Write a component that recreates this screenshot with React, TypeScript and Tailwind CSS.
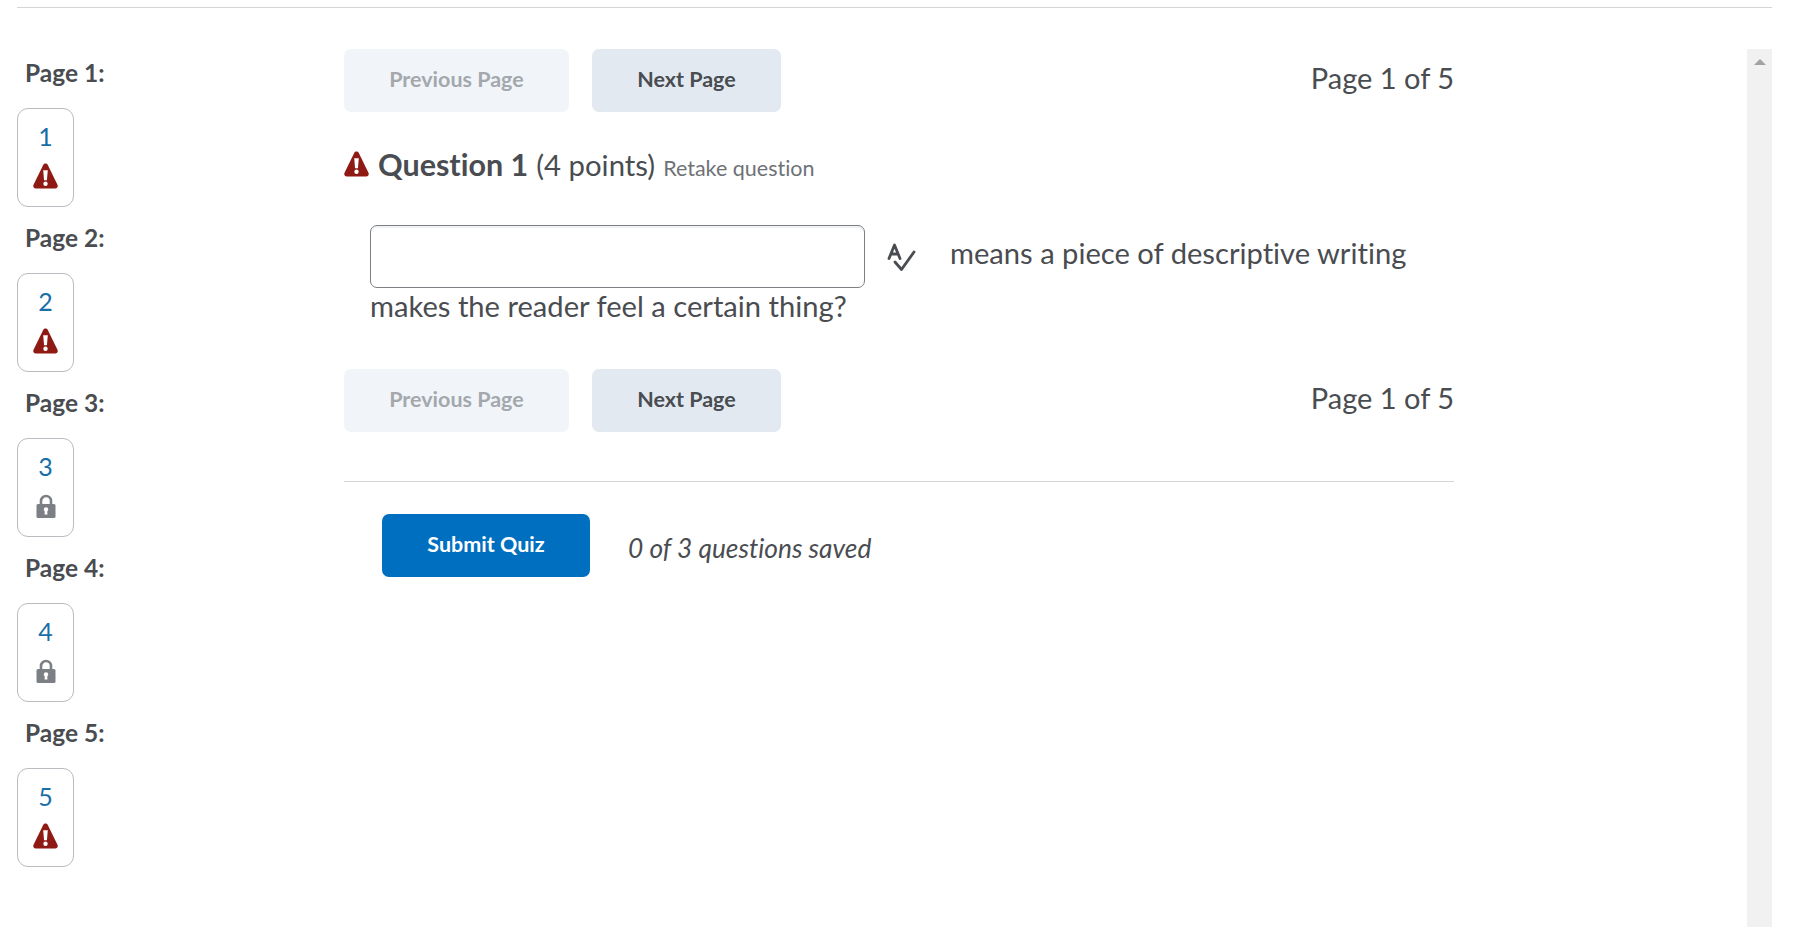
const pages = [
  { n: 1, locked: false },
  { n: 2, locked: false },
  { n: 3, locked: true },
  { n: 4, locked: true },
  { n: 5, locked: false },
];

function WarningIcon({ className }: { className: string }) {
  return (
    <svg viewBox="0 0 24 25" className={className}>
      <path d="M12 .5c-.9 0-1.700.5-2.100 1.300L.5 21c-.8 1.700.3 3.500 2.100 3.500h18.800c1.800 0 2.900-1.800 2.100-3.500L14.100 1.800C13.700 1 12.900.5 12 .5z" fill="#8f1a14" />
      <path d="M9.800 7h4.400l-.8 9.500h-2.800z" fill="#fff" />
      <circle cx="12" cy="20" r="2.100" fill="#fff" />
    </svg>
  );
}

function LockIcon() {
  return (
    <svg viewBox="0 0 20 24" className="w-[20px] h-[24px]">
      <path d="M5 11V7a5 5 0 0 1 10 0v4" fill="none" stroke="#7c7f83" strokeWidth="2.600" />
      <rect x="0.500" y="10" width="19" height="14" rx="1.500" fill="#7c7f83" />
      <circle cx="10" cy="15.500" r="2.200" fill="#fff" />
      <path d="M9 16h2l.5 4.500h-3z" fill="#fff" />
    </svg>
  );
}

function Pager({ className }: { className: string }) {
  return (
    <div className={`flex items-center justify-between ${className}`}>
      <div className="flex gap-[23px]">
        <button className="w-[225px] h-[63px] pb-[3px] rounded-[7px] bg-[#f1f5fa] text-[#a4a8ac] text-[21.500px] font-bold">Previous Page</button>
        <button className="w-[189px] h-[63px] pb-[3px] rounded-[7px] bg-[#e3e9f1] text-[#494c50] text-[21.500px] font-bold">Next Page</button>
      </div>
      <span className="text-[29px] text-[#494c50] pb-[5px]">Page 1 of 5</span>
    </div>
  );
}

export default function App() {
  return (
    <div className="h-[927px] overflow-hidden bg-white text-[#494c50] [font-variant-ligatures:none]" style={{ fontFamily: "Lato, 'Open Sans', sans-serif" }}>
      <div className="ml-[17px] mr-[46px] pt-[7px]">
        <div className="border-t border-[#d3d5d8]" />
        <div className="flex mt-[41px]">
          <div className="w-[327px] shrink-0 -mt-[7px]">
            {pages.map((p) => (
              <div key={p.n}>
                <div className="h-[66px] pl-[8px] pb-[3px] flex items-center text-[24.500px] font-bold">Page {p.n}:</div>
                <div className="w-[57px] h-[99px] rounded-[11px] border border-[#b9bcc0] flex flex-col items-center pt-[11px]">
                  <span className="text-[25px] leading-[32px] text-[#1a6ea8]">{p.n}</span>
                  <span className="mt-[11px] h-[26px] flex items-center">
                    {p.locked ? <LockIcon /> : <WarningIcon className="w-[25px] h-[26px]" />}
                  </span>
                </div>
              </div>
            ))}
          </div>
          <div className="w-[1110px] shrink-0">
            <Pager className="" />
            <div className="mt-[31px] flex items-center h-[44px]">
              <WarningIcon className="w-[25px] h-[26px] mr-[9px] mb-[3px]" />
              <span className="text-[30.500px] font-bold">Question 1</span>
              <span className="text-[29.300px] ml-[8px]">(4 points)</span>
              <span className="text-[21.500px] text-[#6e7276] ml-[8px] mt-[7px]">Retake question</span>
            </div>
            <div className="mt-[38px] pl-[26px] text-[29.150px] leading-[36px]">
              <span className="inline-block align-middle w-[495px] h-[63px] rounded-[7px] border border-[#7c7f83] shadow-[inset_0_2px_0_0_#f1f2f3]" />
              <svg viewBox="0 0 30 30" className="inline-block align-middle w-[30px] h-[30px] ml-[22px] mr-[33px]" fill="none" stroke="#494c50" strokeWidth="2.800" strokeLinecap="round" strokeLinejoin="round">
                <path d="M2 16.500 7.500 3 13 16.500M4 12h7" />
                <path d="M8 20l6.500 7.500L27 10" />
              </svg>
              <span>means a piece of descriptive writing makes the reader feel a certain thing?</span>
            </div>
            <Pager className="mt-[45px]" />
            <div className="mt-[49px] border-t border-[#d3d5d8]" />
            <div className="mt-[32px] ml-[38px] flex items-center">
              <button className="w-[208px] h-[63px] pb-[3px] rounded-[7px] bg-[#006fbf] text-white text-[21.500px] font-bold">Submit Quiz</button>
              <span className="ml-[38px] mt-[6px] text-[26.300px] italic">0 of 3 questions saved</span>
            </div>
          </div>
          <div className="ml-auto w-[25px] h-[900px] bg-[#f1f1f1] flex justify-center pt-[10px]">
            <span className="w-0 h-0 border-x-[6px] border-x-transparent border-b-[6px] border-b-[#a3a3a3]" />
          </div>
        </div>
      </div>
    </div>
  );
}
